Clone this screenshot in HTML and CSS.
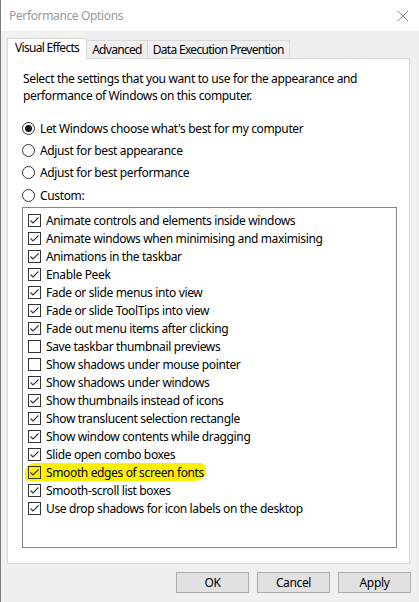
FILE: index.html
```html
<!DOCTYPE html>
<html>
  <head>
    <meta charset="utf-8">
    <title>Performance Options</title>
    <link rel="stylesheet" href="styles.css">
  </head>
  <body>
    <div class="window">
      <div class="titlebar">
        <span class="title">Performance Options</span>
        <svg class="close" width="12" height="12" viewBox="0 0 12 12">
          <path d="M1 1 L11 11 M11 1 L1 11" stroke="#8a8a8a" stroke-width="1" fill="none"/>
        </svg>
      </div>

      <div class="tabs">
        <div class="tab active">Visual Effects</div>
        <div class="tab">Advanced</div>
        <div class="tab">Data Execution Prevention</div>
      </div>

      <div class="panel">
        <p class="intro">Select the settings that you want to use for the appearance and performance of Windows on this computer.</p>

        <div class="radios">
          <div class="radio-row"><span class="radio checked"></span>Let Windows choose what's best for my computer</div>
          <div class="radio-row"><span class="radio"></span>Adjust for best appearance</div>
          <div class="radio-row"><span class="radio"></span>Adjust for best performance</div>
          <div class="radio-row"><span class="radio"></span>Custom:</div>
        </div>

        <div class="listbox" id="effects"></div>
      </div>

      <div class="buttons">
        <button>OK</button>
        <button>Cancel</button>
        <button>Apply</button>
      </div>
    </div>

    <script>
      const effects = [
        ["Animate controls and elements inside windows", true],
        ["Animate windows when minimising and maximising", true],
        ["Animations in the taskbar", true],
        ["Enable Peek", true],
        ["Fade or slide menus into view", true],
        ["Fade or slide ToolTips into view", true],
        ["Fade out menu items after clicking", true],
        ["Save taskbar thumbnail previews", false],
        ["Show shadows under mouse pointer", false],
        ["Show shadows under windows", true],
        ["Show thumbnails instead of icons", true],
        ["Show translucent selection rectangle", true],
        ["Show window contents while dragging", true],
        ["Slide open combo boxes", true],
        ["Smooth edges of screen fonts", true],
        ["Smooth-scroll list boxes", true],
        ["Use drop shadows for icon labels on the desktop", true]
      ];

      const tick = '<svg width="11" height="11" viewBox="0 0 11 11"><path d="M1.5 5.5 L4 8 L9.5 2.5" stroke="#333" stroke-width="1.1" fill="none"/></svg>';

      let list = document.getElementById("effects");
      effects.forEach(([label, on]) => {
        let row = document.createElement("div");
        row.className = "item";
        if (label === "Smooth edges of screen fonts") row.classList.add("marked");
        row.innerHTML = '<span class="check">' + (on ? tick : "") + "</span>" + label;
        list.appendChild(row);
      });
    </script>
  </body>
</html>
```

FILE: styles.css
```css
html, body {
  margin: 0;
  padding: 0;
}

body {
  width: 419px;
  height: 602px;
  background: #f0f0f0;
  font-family: "Noto Sans", "Open Sans", sans-serif;
  font-size: 12px;
  letter-spacing: -0.36px;
  color: #000;
  overflow: hidden;
}

.window {
  height: 602px;
  box-sizing: border-box;
  border-left: 1px solid #7a7a7a;
}

.titlebar {
  height: 31px;
  background: #fff;
  display: flex;
  align-items: center;
  justify-content: space-between;
  padding: 0 9px 0 8px;
}

.title {
  color: #9a9a9a;
  font-size: 12px;
}

.close {
  margin-right: 1px;
}

.tabs {
  display: flex;
  align-items: flex-end;
  margin-top: 7px;
  padding-left: 6px;
  height: 20px;
  letter-spacing: -0.7px;
}

.tab {
  height: 18px;
  box-sizing: border-box;
  border: 1px solid #d9d9d9;
  border-bottom: none;
  background: #f0f0f0;
  padding: 0 5px;
  line-height: 17px;
  margin-left: -1px;
  white-space: nowrap;
}

.tab.active {
  height: 21px;
  margin-bottom: -1px;
  margin-left: 0;
  background: #fff;
  padding: 0 7px;
  line-height: 18px;
  position: relative;
  z-index: 1;
}

.panel {
  margin-left: 6px;
  width: 403px;
  height: 506px;
  box-sizing: border-box;
  border: 1px solid #d9d9d9;
  background: #fff;
  padding: 11px 13px 0 15px;
}

.intro {
  margin: 0;
  line-height: 17px;
  width: 360px;
}

.radios {
  margin-top: 13px;
}

.radio-row {
  height: 22.33px;
  display: flex;
  align-items: center;
  gap: 5px;
  margin-left: -1px;
}

.radio {
  width: 13px;
  height: 13px;
  box-sizing: border-box;
  border: 1px solid #333;
  border-radius: 50%;
  display: flex;
  align-items: center;
  justify-content: center;
}

.radio.checked::after {
  content: "";
  width: 7px;
  height: 7px;
  border-radius: 50%;
  background: #1a1a1a;
}

.listbox {
  margin: 1px 0 0 -1px;
  width: 375px;
  height: 341px;
  box-sizing: border-box;
  border: 1px solid #828790;
  padding: 3px 0 0 5px;
}

.item {
  height: 18px;
  display: flex;
  align-items: center;
  gap: 5px;
  white-space: nowrap;
}

.item.marked {
  width: 178px;
  margin-left: -3px;
  padding-left: 3px;
  background: #fff000;
  border-radius: 9px 6px 10px 4px;
}

.check {
  width: 13px;
  height: 13px;
  box-sizing: border-box;
  border: 1px solid #333;
  display: flex;
  align-items: center;
  justify-content: center;
}

.buttons {
  display: flex;
  justify-content: flex-end;
  gap: 8px;
  margin-top: 8px;
  padding-right: 8px;
}

button {
  width: 73px;
  height: 21px;
  box-sizing: border-box;
  border: 1px solid #adadad;
  background: #e1e1e1;
  font-family: inherit;
  font-size: 12px;
  letter-spacing: inherit;
  color: #000;
  padding: 0;
}
```
